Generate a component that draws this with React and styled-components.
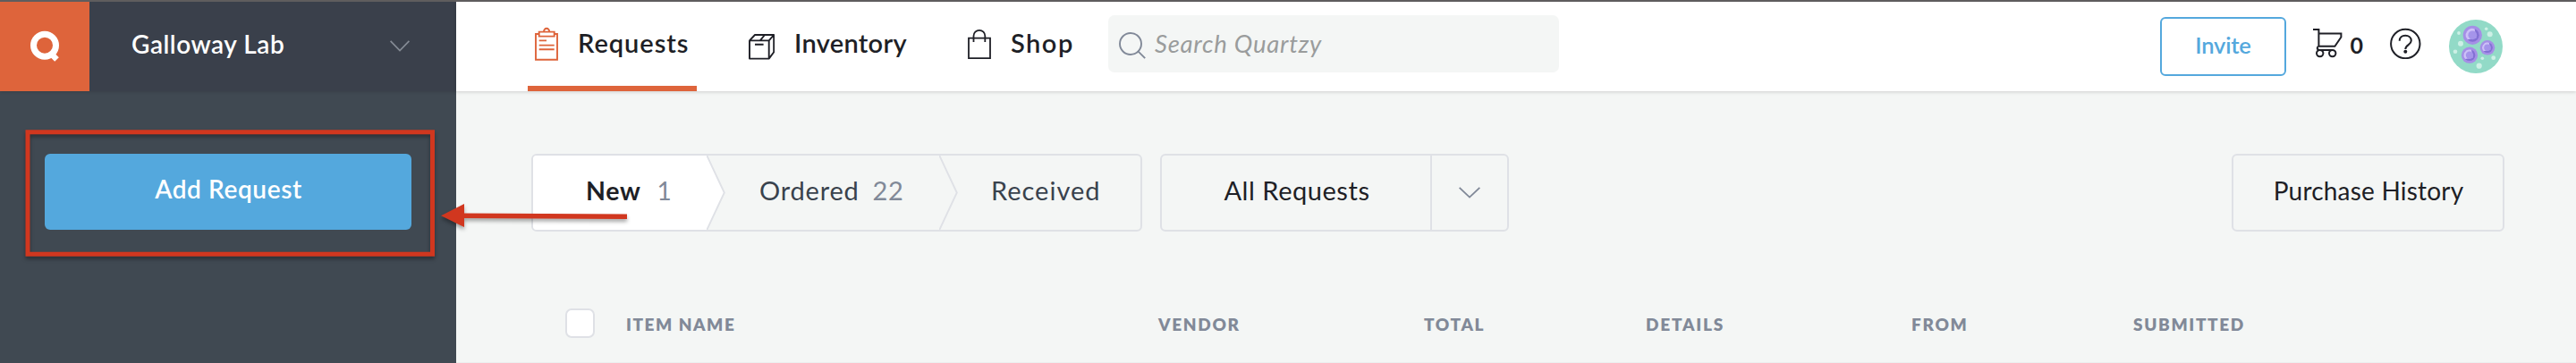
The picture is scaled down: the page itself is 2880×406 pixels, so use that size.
import React from "react";
import styled, { createGlobalStyle } from "styled-components";

const c = {
  orange: "#de643b",
  blue: "#54a8dd",
  slate: "#404952",
  slateDark: "#3a404b",
  page: "#f4f6f5",
  line: "#dfe1e6",
  ink: "#1e1f26",
  text: "#39424d",
  muted: "#818998",
  red: "#d1371f",
};

const GlobalStyle = createGlobalStyle`
  *, *::before, *::after { box-sizing: border-box; }
  body { margin: 0; background: ${c.page}; font-family: Lato, "Liberation Sans", sans-serif; }
  svg { display: block; flex: none; }
`;

const Page = styled.div`
  position: relative;
  display: flex;
  height: 406px;
  border-top: 2px solid #5f5d5e;
  overflow: hidden;
`;

const Label = styled.span`
  font-size: ${(p) => p.$size || 28}px;
  font-weight: ${(p) => p.$weight || 400};
  letter-spacing: ${(p) => p.$track || 0}px;
  color: ${(p) => p.$color || c.ink};
  line-height: 36px;
  white-space: nowrap;
`;

/* Sidebar */
const Sidebar = styled.aside`
  width: 510px;
  flex: none;
  background: ${c.slate};
`;
const LabSwitcher = styled.div`
  display: flex;
  height: 100px;
  background: ${c.slateDark};
  box-shadow: 0 1px 3px rgba(0, 0, 0, 0.12);
`;
const Logo = styled.div`
  width: 100px;
  background: ${c.orange};
`;
const LabName = styled.div`
  flex: 1;
  display: flex;
  align-items: center;
  justify-content: space-between;
  padding: 0 52px 6px 47px;
  svg { margin-top: 5px; }
`;
const AddButton = styled.button`
  display: flex;
  align-items: center;
  justify-content: center;
  width: 410px;
  height: 85px;
  margin: 70px 0 0 50px;
  padding: 0 0 8px 1px;
  border: 0;
  border-radius: 6px;
  background: ${c.blue};
  font-family: inherit;
`;

/* Top bar */
const Main = styled.main`
  flex: 1;
  display: flex;
  flex-direction: column;
`;
const TopBar = styled.header`
  display: flex;
  height: 100px;
  padding: 0 82px 0 80px;
  background: #fff;
  box-shadow: 0 1px 4px rgba(0, 0, 0, 0.16);
`;
const Nav = styled.nav`
  display: flex;
  gap: 50px;
`;
const NavItem = styled.a`
  display: flex;
  align-items: center;
  width: ${(p) => p.$width}px;
  padding: 6px 0 6px 8px;
  gap: 22px;
  border-bottom: 6px solid ${(p) => (p.$active ? c.orange : "transparent")};
  svg { margin-top: ${(p) => p.$drop || 0}px; }
  span { margin-bottom: 2px; }
`;
const Search = styled.div`
  display: flex;
  align-items: center;
  width: 504px;
  height: 64px;
  margin: 15px 0 0 31px;
  padding-left: 12px;
  gap: 10px;
  border-radius: 7px;
  background: ${c.page};
  font-style: italic;
  svg { margin-top: 3px; }
`;
const Actions = styled.div`
  display: flex;
  align-items: flex-start;
  margin-left: auto;
`;
const InviteButton = styled.button`
  width: 141px;
  height: 66px;
  margin-top: 17px;
  padding: 0 1px 5px 0;
  border: 2px solid ${c.blue};
  border-radius: 6px;
  background: #fff;
  font-family: inherit;
`;
const Cart = styled.div`
  display: flex;
  align-items: center;
  margin: 28px 30px 0 30px;
  gap: 8px;
  height: 36px;
  span { margin-top: 4px; }
`;
const Help = styled.div`
  margin: 29px 31px 0 0;
`;
const Avatar = styled.div`
  margin-top: 20px;
`;

/* Toolbar */
const Toolbar = styled.div`
  display: flex;
  margin: 70px 80px 0 84px;
`;
const Outline = styled.div`
  display: flex;
  height: 87px;
  border: 2px solid ${c.line};
  border-radius: 6px;
`;
const Steps = styled(Outline)`
  width: 683px;
  margin-right: 20px;
`;
const Step = styled.div`
  display: flex;
  align-items: center;
  width: ${(p) => p.$width}px;
  padding: 0 0 6px ${(p) => p.$left}px;
  gap: ${(p) => p.$gap || 0}px;
  border-radius: 4px 0 0 4px;
  background: ${(p) => (p.$active ? "#fff" : "transparent")};
`;
const Filter = styled(Outline)`
  width: 390px;
`;
const FilterValue = styled.div`
  display: flex;
  align-items: center;
  justify-content: center;
  flex: 1;
  padding: 0 0 6px 2px;
`;
const FilterToggle = styled.div`
  display: flex;
  align-items: center;
  justify-content: center;
  width: 86px;
  border-left: 2px solid ${c.line};
`;
const History = styled(Outline)`
  align-items: center;
  justify-content: center;
  width: 305px;
  margin-left: auto;
  padding: 0 0 6px 1px;
`;

/* Table */
const TableHead = styled.div`
  display: grid;
  grid-template-columns: 67px 595px 297px 248px 297px 248px 1fr;
  align-items: center;
  height: 89px;
  margin-top: auto;
  padding: 0 80px 0 122px;
  border-bottom: 1px solid #eceeee;
  span { padding: 4px 0 0 1px; }
`;
const Checkbox = styled.div`
  width: 33px;
  height: 33px;
  border: 2px solid ${c.line};
  border-radius: 7px;
  background: #fff;
`;

const Annotation = styled.svg`
  position: absolute;
  left: 0;
  top: -2px;
  pointer-events: none;
  filter: drop-shadow(0 3px 2px rgba(0, 0, 0, 0.35));
`;

const Chevron = ({ color, width = 22 }) => (
  <svg width={width} height="13" viewBox="0 0 22 13" preserveAspectRatio="none" fill="none" stroke={color} strokeWidth="1.7">
    <path d="M.6.8 11 11.5 21.4.8" />
  </svg>
);

const LogoMark = () => (
  <svg width="100" height="100" fill="none" stroke="#fff" strokeWidth="7">
    <circle cx="50" cy="48.7" r="12.5" />
    <path d="m55.5 56.5 8 8" strokeWidth="6.5" />
  </svg>
);

const ClipboardIcon = () => (
  <svg width="26" height="38" fill="none" stroke={c.orange} strokeWidth="1.9">
    <path d="M5 8H1v28.8h24V8h-4" />
    <path d="M4.7 5.6h17v5h-17z" />
    <path d="M10 5.4a3.1 3.6 0 0 1 6.2 0" />
    <path d="M4.7 15.4H13M4.7 20.6h17M4.7 25.3h17" />
  </svg>
);

const BoxIcon = () => (
  <svg width="29" height="29" fill="none" stroke={c.ink} strokeWidth="1.9">
    <path d="M1 7.4h21.7V27.6H1zM1 7.4l6-6.4h21.2l-5.5 6.4M28.2 1v19.3l-5.5 7.3M18 1l-5.2 6.4M7 11.8h9.6" strokeLinejoin="round" />
  </svg>
);

const BagIcon = () => (
  <svg width="26" height="34" fill="none" stroke={c.ink} strokeWidth="1.8">
    <path d="M1 10.6h24v22.6H1z" />
    <path d="M6.5 15V8.2a6.4 6.4 0 0 1 12.8 0V15" />
  </svg>
);

const SearchIcon = () => (
  <svg width="30" height="30" fill="none" stroke={c.muted} strokeWidth="1.9">
    <circle cx="13" cy="13" r="12" />
    <path d="m21.4 21.4 7.8 7.8" />
  </svg>
);

const CartIcon = () => (
  <svg width="33" height="33" fill="none" stroke={c.ink} strokeWidth="2">
    <path d="M0 1h6.4v18.7h18l7-10.2V5.4H6.4M6.4 19.7C4 20.7 4 24 7.4 23.9H22" />
    <circle cx="7.7" cy="27.6" r="3.7" />
    <circle cx="21.7" cy="27.6" r="3.7" />
  </svg>
);

const HelpIcon = () => (
  <svg width="35" height="35" fill="none" stroke={c.ink} strokeWidth="2">
    <circle cx="17.3" cy="18" r="16.2" />
    <path d="M10.7 14.7c0-3.8 2.8-5.9 6.5-5.9s6.6 2.2 6.6 5.7c0 4.8-6.5 4.4-6.5 9.6" />
    <circle cx="17.3" cy="26.8" r="2" fill={c.ink} stroke="none" />
  </svg>
);

const cells = [[26.3, 17.3, 10.6], [43, 31.3, 8.3], [23, 39.7, 9.1]];
const dots = [[11, 15, 1.9], [13, 26.7, 3], [7, 35.7, 2.3], [41.7, 10.3, 1.8], [45.7, 16.3, 3], [49.7, 42.7, 2.4], [37.3, 43.3, 1.8], [33.7, 51.7, 3.1]];

const AvatarArt = () => (
  <svg width="60" height="60">
    <circle cx="30" cy="30" r="30" fill="#92dac7" />
    {dots.map(([x, y, r]) => <circle key={x} cx={x} cy={y} r={r} fill="#cdf0e6" />)}
    {cells.map(([x, y, r]) => (
      <g key={x} transform={`translate(${x} ${y}) scale(${r / 10})`}>
        <circle r="10" fill="#a58fe6" />
        <circle r="7" fill="#8270d4" />
        <path d="M-5.2 4.7A7 7 0 0 1 2.2-6.7L4 3z" fill="#cdc0f7" />
        <circle r="4.6" fill="#a594ea" />
      </g>
    ))}
  </svg>
);

const StepArrow = ({ fill = "none" }) => (
  <svg width="21" height="83">
    <path d="M0 0 19.8 41.5 0 83z" fill={fill} />
    <path d="M.3 0 19.8 41.5.3 83" fill="none" stroke={c.line} strokeWidth="1.9" />
  </svg>
);

const columns = [
  ["ITEM NAME", 1.55], ["VENDOR", 1.7], ["TOTAL", 1.6],
  ["DETAILS", 1.8], ["FROM", 1.7], ["SUBMITTED", 1.65],
];

export default function App() {
  return (
    <>
      <GlobalStyle />
      <Page>
        <Sidebar>
          <LabSwitcher>
            <Logo><LogoMark /></Logo>
            <LabName>
              <Label $weight={600} $track={0.55} $color="#fff">Galloway Lab</Label>
              <Chevron color="#858b95" />
            </LabName>
          </LabSwitcher>
          <AddButton><Label $weight={600} $track={0.6} $color="#fff">Add Request</Label></AddButton>
        </Sidebar>
        <Main>
          <TopBar>
            <Nav>
              <NavItem $active $width={189}>
                <ClipboardIcon /><Label $size={29} $weight={600} $track={0.95}>Requests</Label>
              </NavItem>
              <NavItem $width={195} $drop={6}>
                <BoxIcon /><Label $size={29} $weight={600} $track={0.3}>Inventory</Label>
              </NavItem>
              <NavItem $width={134}>
                <BagIcon /><Label $size={29} $weight={600} $track={1.5}>Shop</Label>
              </NavItem>
            </Nav>
            <Search>
              <SearchIcon /><Label $size={27.5} $track={0.75} $color="#9a9c9c">Search Quartzy</Label>
            </Search>
            <Actions>
              <InviteButton><Label $size={25.5} $weight={600} $track={-0.2} $color={c.blue}>Invite</Label></InviteButton>
              <Cart><CartIcon /><Label $size={25} $weight={700}>0</Label></Cart>
              <Help><HelpIcon /></Help>
              <Avatar><AvatarArt /></Avatar>
            </Actions>
          </TopBar>
          <Toolbar>
            <Steps>
              <Step $active $width={194} $left={59} $gap={18}>
                <Label $size={28.5} $weight={700} $track={0.7}>New</Label><Label $color={c.muted}>1</Label>
              </Step>
              <StepArrow fill="#fff" />
              <Step $width={239} $left={38} $gap={15}>
                <Label $size={29} $track={0.8} $color={c.text}>Ordered</Label>
                <Label $size={29} $track={0.6} $color={c.muted}>22</Label>
              </Step>
              <StepArrow />
              <Step $width={200} $left={37}>
                <Label $size={29} $track={1} $color={c.text}>Received</Label>
              </Step>
            </Steps>
            <Filter>
              <FilterValue><Label $size={29} $track={0.55}>All Requests</Label></FilterValue>
              <FilterToggle><Chevron color={c.muted} width={24} /></FilterToggle>
            </Filter>
            <History><Label $track={0.2}>Purchase History</Label></History>
          </Toolbar>
          <TableHead>
            <Checkbox />
            {columns.map(([name, track]) => (
              <Label key={name} $size={19} $weight={800} $track={track} $color={c.muted}>{name}</Label>
            ))}
          </TableHead>
        </Main>
        <Annotation width="720" height="300" fill="none" stroke={c.red} strokeWidth="5">
          <path d="M31 147.8h452.5v136.4H31z" />
          <path d="M516 241.2 701 242.2" strokeWidth="5.4" />
          <path d="M493 241.2 519 228v26z" fill={c.red} stroke="none" />
        </Annotation>
      </Page>
    </>
  );
}
